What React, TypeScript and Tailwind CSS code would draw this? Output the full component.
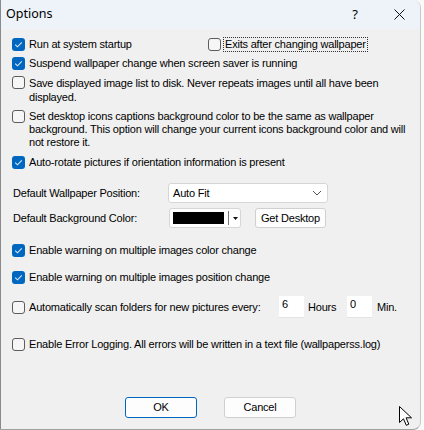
import React from "react";

const body = "font-['Liberation_Sans',Arial,sans-serif] text-[11px] tracking-[-0.2px] text-black";

function Box({ checked }: { checked: boolean }) {
  return checked ? (
    <span className="w-[13px] h-[13px] rounded-[3px] bg-[#0067c0] flex items-center justify-center shrink-0">
      <svg width="9" height="7" viewBox="0 0 9 7">
        <path d="M1.2 3.6 L3.5 5.8 L7.8 1.4" stroke="#dbe9f7" strokeWidth="1.1" fill="none" />
      </svg>
    </span>
  ) : (
    <span className="w-[13px] h-[13px] rounded-[3px] border border-[#5c5c5c] bg-[#f6f6f6] shrink-0" />
  );
}

function Check({ checked, children, lh = "leading-[13px]", className = "" }: { checked: boolean; children: React.ReactNode; lh?: string; className?: string }) {
  return (
    <div className={`flex items-start gap-[4px] ${className}`}>
      <Box checked={checked} />
      <span className={lh}>{children}</span>
    </div>
  );
}

export default function App() {
  return (
    <div className={`w-[424px] h-[430px] bg-[#fafafa] relative overflow-hidden ${body}`}>
      <div className="w-[421px] h-[430px] bg-[#f0f0f0] border-l border-[#8a8a8a] border-r border-b border-r-[#c8c8c8] border-b-[#a0a0a0] rounded-tr-[8px] rounded-br-[8px] overflow-hidden flex flex-col">
        {/* title bar */}
        <div className="h-[29px] bg-[#eef3f9] flex items-center shrink-0">
          <span className="pl-[5px] font-['Noto_Sans',sans-serif] text-[12.5px] tracking-normal text-black flex-1">Options</span>
          <span className="w-[46px] text-center font-['Noto_Sans',sans-serif] text-[13px] tracking-normal">?</span>
          <span className="w-[42px] flex justify-center">
            <svg width="11" height="11" viewBox="0 0 11 11">
              <path d="M0.5 0.5 L10.5 10.5 M10.5 0.5 L0.5 10.5" stroke="#111" strokeWidth="1" />
            </svg>
          </span>
        </div>
        {/* body */}
        <div className="pl-[11px] flex flex-col">
          <div className="mt-[9px] flex items-start">
            <Check checked className="w-[196px]">Run at system startup</Check>
            <div className="flex items-start gap-[3px]">
              <Box checked={false} />
              <span className="leading-[13px] outline outline-1 outline-dotted outline-[#333] px-[1px]">Exits after changing wallpaper</span>
            </div>
          </div>
          <Check checked className="mt-[6px]">Suspend wallpaper change when screen saver is running</Check>
          <Check checked={false} className="mt-[6px]" lh="leading-[14px]">
            Save displayed image list to disk. Never repeats images until all have been
            <br />
            displayed.
          </Check>
          <Check checked={false} className="mt-[6px]" lh="leading-[13px]">
            Set desktop icons captions background color to be the same as wallpaper
            <br />
            background. This option will change your current icons background color and will
            <br />
            not restore it.
          </Check>
          <Check checked className="mt-[7px]">Auto-rotate pictures if orientation information is present</Check>

          <div className="mt-[14px] h-[20px] flex items-center">
            <span className="w-[156px] pl-[1px]">Default Wallpaper Position:</span>
            <div className="w-[160px] h-[20px] bg-white border border-[#d6d6d6] rounded-[3px] flex items-center justify-between pl-[4px] pr-[5px]">
              <span>Auto Fit</span>
              <svg width="10" height="6" viewBox="0 0 10 6">
                <path d="M1 1 L5 5 L9 1" stroke="#555" strokeWidth="1" fill="none" />
              </svg>
            </div>
          </div>
          <div className="mt-[5px] h-[20px] flex items-center">
            <span className="w-[157px] pl-[1px]">Default Background Color:</span>
            <div className="w-[72px] h-[20px] bg-white border border-[#d6d6d6] rounded-[3px] flex items-center pl-[3px]">
              <span className="w-[51px] h-[12px] bg-black" />
              <span className="ml-[4px] w-[1px] h-[14px] bg-[#777]" />
              <svg className="ml-[4px]" width="5" height="3" viewBox="0 0 5 3">
                <path d="M0 0 L5 0 L2.5 3 Z" fill="#111" />
              </svg>
            </div>
            <div className="ml-[14px] w-[71px] h-[20px] bg-[#fdfdfd] border border-[#d0d0d0] rounded-[3px] flex items-center justify-center">
              Get Desktop
            </div>
          </div>

          <Check checked className="mt-[16px]">Enable warning on multiple images color change</Check>
          <Check checked className="mt-[14px]">Enable warning on multiple images position change</Check>

          <div className="mt-[12px] h-[22px] flex items-center">
            <Check checked={false} className="w-[266px]">Automatically scan folders for new pictures every:</Check>
            <div className="ml-[1px] w-[25px] h-[22px] bg-white border-b border-[#e4e4e4] pl-[3px] pt-[2px] leading-[13px]">6</div>
            <span className="ml-[4px] w-[39px]">Hours</span>
            <div className="w-[25px] h-[22px] bg-white border-b border-[#e4e4e4] pl-[3px] pt-[2px] leading-[13px]">0</div>
            <span className="ml-[5px]">Min.</span>
          </div>

          <Check checked={false} className="mt-[20px]">Enable Error Logging. All errors will be written in a text file (wallpaperss.log)</Check>

          <div className="mt-[46px] flex pl-[113px] gap-[27px]">
            <div className="w-[72px] h-[21px] bg-[#fdfdfd] border border-[#0067c0] rounded-[3px] flex items-center justify-center">OK</div>
            <div className="w-[72px] h-[21px] bg-[#fdfdfd] border border-[#d0d0d0] rounded-[3px] flex items-center justify-center">Cancel</div>
          </div>
        </div>
      </div>
      <svg className="absolute left-[399px] top-[406px]" width="14" height="22" viewBox="0 0 14 22">
        <path d="M0.5 0.5 L0.5 16.5 L4.5 12.8 L7.3 19.3 L9.8 18.2 L7.1 11.8 L12.5 11.8 Z" fill="#fff" stroke="#000" strokeWidth="1" />
      </svg>
    </div>
  );
}
